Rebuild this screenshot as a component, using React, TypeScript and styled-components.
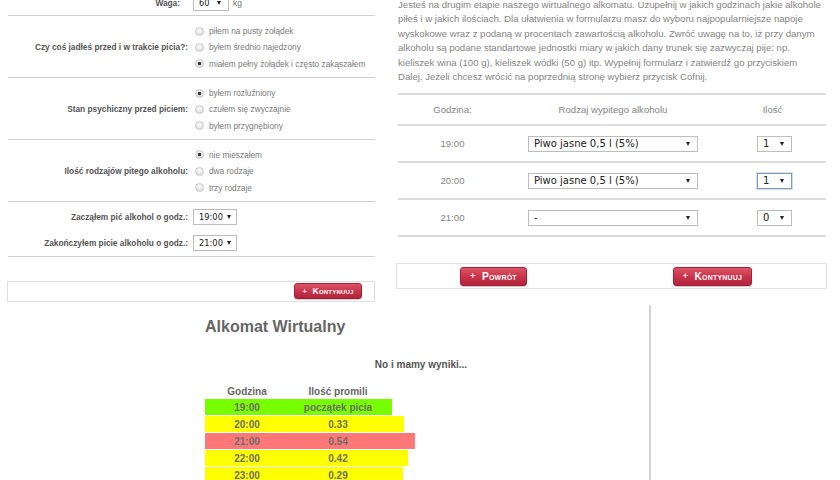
import React from "react";
import styled, { createGlobalStyle } from "styled-components";

const GlobalStyle = createGlobalStyle`
  html, body { margin: 0; padding: 0; background: #fff; }
  body {
    width: 840px; height: 480px; overflow: hidden;
    font-family: "Liberation Sans", Arial, sans-serif;
  }
`;

const Page = styled.div`
  display: grid;
  grid-template-columns: 390px 450px;
  grid-template-rows: 305px 175px;
  width: 840px;
  height: 480px;
  overflow: hidden;
`;

/* ---------- shared controls ---------- */

const SelectBox = styled.span<{ $w: number; $h: number; $fs: number; $focus?: boolean }>`
  display: inline-flex;
  align-items: center;
  justify-content: space-between;
  box-sizing: border-box;
  width: ${(p) => p.$w}px;
  height: ${(p) => p.$h}px;
  padding: 0 7px 0 5px;
  border: 1px solid ${(p) => (p.$focus ? "#7f9db9" : "#bdbdbd")};
  box-shadow: ${(p) => (p.$focus ? "0 0 0 1px rgba(127,157,185,.35)" : "none")};
  background: #fff;
  font-family: "DejaVu Sans", Verdana, sans-serif;
  font-size: ${(p) => p.$fs}px;
  color: #222;
  white-space: nowrap;
`;

const Caret = styled.span`
  flex: none;
  margin-left: 4px;
  width: 0;
  height: 0;
  border-left: 2.5px solid transparent;
  border-right: 2.5px solid transparent;
  border-top: 4px solid #222;
`;

const RedButton = styled.button<{ $w: number; $h: number; $fs: number }>`
  display: inline-flex;
  align-items: center;
  justify-content: center;
  box-sizing: border-box;
  width: ${(p) => p.$w}px;
  height: ${(p) => p.$h}px;
  padding: 0;
  border: 1px solid #a51f35;
  border-radius: 3px;
  background: linear-gradient(#de5467, #c73249 55%, #b0243b);
  box-shadow: 0 1px 1px rgba(0, 0, 0, 0.22);
  color: #fff;
  font-family: "Liberation Sans", Arial, sans-serif;
  font-weight: bold;
  font-variant: small-caps;
  font-size: ${(p) => p.$fs}px;
  letter-spacing: 0.2px;
`;

const Plus = styled.span`
  font-size: 0.85em;
  opacity: 0.85;
  margin-right: 0.75em;
`;

const Select = ({ value, w, h, fs, focus }: { value: string; w: number; h: number; fs: number; focus?: boolean }) => (
  <SelectBox $w={w} $h={h} $fs={fs} $focus={focus}>
    <span>{value}</span>
    <Caret />
  </SelectBox>
);

/* ---------- left panel ---------- */

const LeftPanel = styled.section`
  overflow: hidden;
  font-size: 8.3px;
  color: #555;
`;

const FormBody = styled.div`
  margin-top: -10px;
`;

const Section = styled.div<{ $pad?: string }>`
  margin: 0 15px 0 8px;
  padding: ${(p) => p.$pad ?? "0"};
  border-bottom: 1px solid #d0d0d0;
`;

const FieldRow = styled.div<{ $h?: number }>`
  display: grid;
  grid-template-columns: 180px 1fr;
  column-gap: 5px;
  align-items: center;
  min-height: ${(p) => p.$h ?? 0}px;
`;

const FieldLabel = styled.div<{ $inset?: number }>`
  text-align: right;
  font-weight: bold;
  color: #555;
  white-space: nowrap;
  padding-right: ${(p) => p.$inset ?? 0}px;
`;

const FieldInputs = styled.div`
  display: flex;
  align-items: center;
  gap: 4px;
  color: #777;
`;

const RadioList = styled.div`
  display: flex;
  flex-direction: column;
`;

const RadioItem = styled.label`
  display: flex;
  align-items: center;
  gap: 5px;
  height: 16.3px;
  padding-left: 2px;
  color: #7a7a7a;
  white-space: nowrap;
`;

const Radio = styled.input.attrs({ type: "radio" })`
  appearance: none;
  margin: 0;
  width: 9px;
  height: 9px;
  box-sizing: border-box;
  border-radius: 50%;
  border: 1px solid #c6c6c6;
  background: radial-gradient(circle at 50% 30%, #fbfbfb, #d9d9d9);
  &:checked {
    background: radial-gradient(circle, #3a3a3a 0 1.4px, transparent 2.1px),
      radial-gradient(circle at 50% 30%, #fbfbfb, #d9d9d9);
  }
`;

const LeftActions = styled.div`
  margin: 24px 15px 0 7px;
  height: 21px;
  box-sizing: border-box;
  border: 1px solid #dedede;
  display: flex;
  align-items: center;
  justify-content: flex-end;
  padding-right: 12px;
`;

type RadioGroup = { label: string; name: string; options: string[]; checked: number };

const groups: RadioGroup[] = [
  {
    label: "Czy coś jadłeś przed i w trakcie picia?:",
    name: "food",
    options: ["piłem na pusty żołądek", "byłem średnio najedzony", "miałem pełny żołądek i często zakąszałem"],
    checked: 2,
  },
  {
    label: "Stan psychiczny przed piciem:",
    name: "mood",
    options: ["byłem rozluźniony", "czułem się zwyczajnie", "byłem przygnębiony"],
    checked: 0,
  },
  {
    label: "Ilość rodzajów pitego alkoholu:",
    name: "kinds",
    options: ["nie mieszałem", "dwa rodzaje", "trzy rodzaje"],
    checked: 0,
  },
];

/* ---------- right panel ---------- */

const RightPanel = styled.section`
  overflow: hidden;
  font-size: 9.6px;
  color: #858585;
`;

const Intro = styled.p`
  margin: -2px 14px 9px 8px;
  line-height: 14.4px;
  white-space: nowrap;
`;

const DrinkTable = styled.div`
  margin: 0 14px 0 8px;
  border-top: 2px solid #dcdcdc;
`;

const DrinkRow = styled.div<{ $h: number }>`
  display: grid;
  grid-template-columns: 109px 212px 107px;
  justify-items: center;
  align-items: center;
  height: ${(p) => p.$h}px;
  border-bottom: 2px solid #dcdcdc;
`;

const QtyCell = styled.div`
  padding-left: 4px;
`;

const RightActions = styled.div`
  margin: 26px 13px 0 6px;
  height: 26px;
  box-sizing: border-box;
  border: 1px solid #e2e2e2;
  display: flex;
  align-items: center;
  justify-content: space-between;
  padding: 0 74px 0 63px;
`;

const drinks = [
  { time: "19:00", kind: "Piwo jasne 0,5 l (5%)", qty: "1" },
  { time: "20:00", kind: "Piwo jasne 0,5 l (5%)", qty: "1", focus: true },
  { time: "21:00", kind: "-", qty: "0" },
];

/* ---------- bottom panel ---------- */

const BottomPanel = styled.section`
  grid-column: 1 / -1;
  display: grid;
  grid-template-columns: 649px 2px 1fr;
`;

const Results = styled.div`
  padding: 0 12px 0 205px;
`;

const Divider = styled.div`
  background: #d2d2d2;
`;

const Title = styled.h1`
  margin: 12px 0 0;
  font-size: 16px;
  line-height: 19px;
  font-weight: bold;
  color: #666;
`;

const Lead = styled.p`
  margin: 22px 0 0;
  text-align: center;
  font-size: 10px;
  line-height: 14px;
  font-weight: bold;
  color: #555;
`;

const ResultHead = styled.div`
  margin-top: 13px;
  display: grid;
  grid-template-columns: 84px 98px;
  height: 13px;
  align-items: center;
  text-align: center;
  font-size: 10px;
  font-weight: bold;
  color: #666;
`;

const levelColor = { start: "#77ff00", mid: "#ffff00", high: "#ff7777" } as const;

const ResultRow = styled.div<{ $level: keyof typeof levelColor }>`
  display: grid;
  grid-template-columns: 84px 98px;
  align-items: center;
  height: 16px;
  margin-top: 1px;
  text-align: center;
  font-size: 10px;
  font-weight: bold;
  color: #6e6e6e;
  background: ${(p) => levelColor[p.$level]};
`;

const results: { time: string; value: string; level: keyof typeof levelColor; width: number }[] = [
  { time: "19:00", value: "początek picia", level: "start", width: 187 },
  { time: "20:00", value: "0.33", level: "mid", width: 199 },
  { time: "21:00", value: "0.54", level: "high", width: 210 },
  { time: "22:00", value: "0.42", level: "mid", width: 203 },
  { time: "23:00", value: "0.29", level: "mid", width: 198 },
];

export default function App() {
  return (
    <>
      <GlobalStyle />
      <Page>
        <LeftPanel>
          <FormBody>
            <Section>
              <FieldRow $h={25}>
                <FieldLabel $inset={8}>Waga:</FieldLabel>
                <FieldInputs>
                  <Select value="60" w={36} h={17} fs={8.3} />
                  <span>kg</span>
                </FieldInputs>
              </FieldRow>
            </Section>
            {groups.map((g) => (
              <Section key={g.name} $pad="7px 0 5px">
                <FieldRow>
                  <FieldLabel>{g.label}</FieldLabel>
                  <RadioList>
                    {g.options.map((o, i) => (
                      <RadioItem key={o}>
                        <Radio name={g.name} defaultChecked={i === g.checked} />
                        {o}
                      </RadioItem>
                    ))}
                  </RadioList>
                </FieldRow>
              </Section>
            ))}
            <Section $pad="2px 0 0">
              <FieldRow $h={26}>
                <FieldLabel>Zacząłem pić alkohol o godz.:</FieldLabel>
                <FieldInputs>
                  <Select value="19:00" w={44} h={16} fs={8.3} />
                </FieldInputs>
              </FieldRow>
              <FieldRow $h={26}>
                <FieldLabel>Zakończyłem picie alkoholu o godz.:</FieldLabel>
                <FieldInputs>
                  <Select value="21:00" w={44} h={16} fs={8.3} />
                </FieldInputs>
              </FieldRow>
            </Section>
            <LeftActions>
              <RedButton $w={68} $h={16} $fs={8.7}>
                <Plus>+</Plus>Kontynuuj
              </RedButton>
            </LeftActions>
          </FormBody>
        </LeftPanel>

        <RightPanel>
          <Intro>
            Jesteś na drugim etapie naszego wirtualnego alkomatu. Uzupełnij w jakich godzinach jakie alkohole
            <br />
            piłeś i w jakich ilościach. Dla ułatwienia w formularzu masz do wyboru najpopularniejsze napoje
            <br />
            wyskokowe wraz z podaną w procentach zawartością alkoholu. Zwróć uwagę na to, iż przy danym
            <br />
            alkoholu są podane standartowe jednostki miary w jakich dany trunek się zazwyczaj pije: np.
            <br />
            kieliszek wina (100 g), kieliszek wódki (50 g) itp. Wypełnij formularz i zatwierdź go przyciskiem
            <br />
            Dalej. Jeżeli chcesz wrócić na poprzednią stronę wybierz przycisk Cofnij.
          </Intro>
          <DrinkTable>
            <DrinkRow $h={29}>
              <span>Godzina:</span>
              <span>Rodzaj wypitego alkoholu</span>
              <span>Ilość</span>
            </DrinkRow>
            {drinks.map((d) => (
              <DrinkRow key={d.time} $h={35}>
                <span>{d.time}</span>
                <Select value={d.kind} w={170} h={16} fs={10} />
                <QtyCell>
                  <Select value={d.qty} w={35} h={16} fs={10} focus={d.focus} />
                </QtyCell>
              </DrinkRow>
            ))}
          </DrinkTable>
          <RightActions>
            <RedButton $w={67} $h={19} $fs={10.2}>
              <Plus>+</Plus>Powrót
            </RedButton>
            <RedButton $w={79} $h={19} $fs={10.2}>
              <Plus>+</Plus>Kontynuuj
            </RedButton>
          </RightActions>
        </RightPanel>

        <BottomPanel>
          <Results>
            <Title>Alkomat Wirtualny</Title>
            <Lead>No i mamy wyniki...</Lead>
            <ResultHead>
              <span>Godzina</span>
              <span>Ilość promili</span>
            </ResultHead>
            {results.map((r) => (
              <ResultRow key={r.time} $level={r.level} style={{ width: r.width }}>
                <span>{r.time}</span>
                <span>{r.value}</span>
              </ResultRow>
            ))}
          </Results>
          <Divider />
          <div />
        </BottomPanel>
      </Page>
    </>
  );
}
